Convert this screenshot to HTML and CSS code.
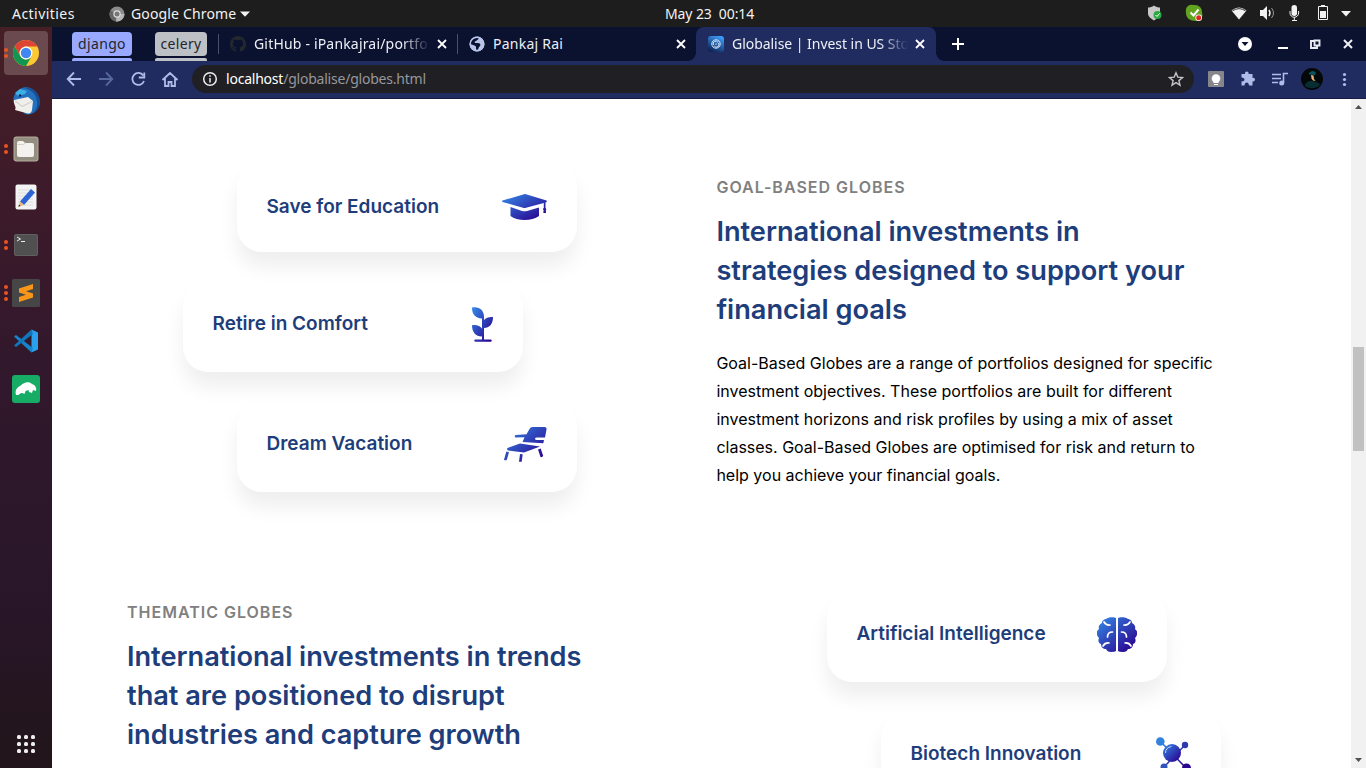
FILE: index.html
```html
<!DOCTYPE html>
<html lang="en">
<head>
<meta charset="utf-8">
<title>Globalise | Invest in US Stocks</title>
<link rel="stylesheet" href="styles.css">
</head>
<body>
<svg class="defs" width="0" height="0"><defs>
<linearGradient id="blue" x1="0" y1="0" x2="1" y2="1"><stop offset="0" stop-color="#348be8"/><stop offset=".9" stop-color="#2a0590"/></linearGradient>
<linearGradient id="fav" x1="0.7" y1="0" x2="0.2" y2="1"><stop offset="0" stop-color="#3d9bfa"/><stop offset="1" stop-color="#0a2050"/></linearGradient>
</defs></svg>
<header class="topbar">
  <span class="activities">Activities</span>
  <svg class="app-icon" width="16" height="16" viewBox="0 0 16 16"><circle cx="8" cy="8" r="7.5" fill="#8b8b8b"/><path d="M8 8L1.5 4.2A7.5 7.5 0 0 0 7 15.4z" fill="#656565"/><path d="M8 8h7.5A7.5 7.5 0 0 1 7 15.4z" fill="#b7b7b7"/><circle cx="8" cy="8" r="3.7" fill="#ddd"/><circle cx="8" cy="8" r="2.5" fill="#777"/></svg>
  <span class="app-name">Google Chrome</span>
  <svg class="caret" width="10" height="6"><path d="M0 .5h10L5 5.8z" fill="#f2f2f2"/></svg>
  <span class="clock">May 23&nbsp; 00:14</span>
  <svg class="tray" width="222" height="27" viewBox="1144 0 222 27">
    <path d="M1154 5.500c2 1.500 4 2 6 2v6c0 3-3 5-6 7-3-2-6-4-6-7v-6c2 0 4-.5 6-2z" fill="#c9c9c9"/><circle cx="1157.500" cy="15" r="4" fill="#2ca844"/><path d="M1155.500 15l1.500 1.500 2.500-3" stroke="#fff" fill="none"/>
    <path d="M1190 5c2-.7 3 0 5 0 4 0 7 3 7 7 0 2 1 3 0 5-1 3-4 4-6 4-6 0-10-3-10-8 0-1-.4-2 0-4 .5-2 2-3.500 4-4z" fill="#62a420"/><path d="M1190.500 12.500l3 3 5-6" stroke="#fff" stroke-width="2" fill="none"/><circle cx="1198.700" cy="17.700" r="3.300" fill="#fff"/><circle cx="1198.700" cy="17.700" r="2.500" fill="#e52620"/>
    <path d="M1231.500 10.500q7.500-6 15 0L1239 19.500z" fill="#f2f2f2"/><path d="M1232.500 10.800q6.500-4.300 13 0" fill="none" stroke="#1d1d1d" stroke-width=".9"/>
    <path d="M1260 10h3l4-4v14l-4-4h-3z" fill="#f2f2f2"/><path d="M1269 10q2 3 0 6" stroke="#f2f2f2" stroke-width="1.500" fill="none"/><path d="M1271.500 8q4 5 0 10" stroke="#999" fill="none"/>
    <rect x="1291.500" y="5" width="5.500" height="11" rx="2.700" fill="#f2f2f2"/><path d="M1290 11v2a4.300 4.300 0 0 0 8.600 0v-2M1294.300 17v3M1292 20.500h5" stroke="#f2f2f2" fill="none"/>
    <path d="M1318.500 6.500h9v13h-9z" stroke="#f2f2f2" fill="none"/><path d="M1321 5h4v1h-4zM1320 11h6v7h-6z" fill="#f2f2f2"/>
    <path d="M1341 11h10l-5 5.500z" fill="#f2f2f2"/>
  </svg>
</header>
<div class="desktop">
  <nav class="dock">
    <div class="app focused"><i class="dots"><b></b><b></b></i><svg width="28" height="28" viewBox="0 0 28 28"><circle cx="14" cy="14" r="13" fill="#fcc934"/><path d="M2.700 7.500A13 13 0 0 1 25.300 7.500H14a6.500 6.500 0 0 0-5.600 9.700z" fill="#dd4436"/><path d="M2.700 7.500l5.700 9.700a6.500 6.500 0 0 0 11.200 0L14 27A13 13 0 0 1 2.700 7.500z" fill="#129550"/><circle cx="14" cy="14" r="6.400" fill="#fff"/><circle cx="14" cy="14" r="5.200" fill="#4087f2"/></svg></div>
    <div class="app"><svg width="28" height="28" viewBox="0 0 28 28"><path d="M8 2C12-1 20 0 24 5c5 6 5 15-1 20-3 2-6 3-10 2L2 16C0 11 3 5 8 2z" fill="#2471bd"/><path d="M12 1c7 1 12 6 13 13 1 5-1 10-5 12 8-2 9-10 7-16C24 3 18 0 12 1z" fill="#174f96"/><path d="M3 6l5-4 7 2-2 3-7 2z" fill="#3cb0e6"/><path d="M2 13l14-3 5 4-1 9c-1 4-3 4-6 3L3 23c2-3-2-6-1-10z" fill="#f0efeb"/><path d="M3 13.500l7 6 10-5" stroke="#c9c7c2" fill="none"/><circle cx="8" cy="8.500" r="1.200" fill="#13264d"/></svg></div>
    <div class="app"><i class="dots"><b></b><b></b></i><svg width="28" height="28" viewBox="0 0 28 28"><rect x="1.500" y="1.500" width="25" height="25" rx="3" fill="#b3ad9d"/><rect x="2.500" y="2.500" width="23" height="23" rx="2" fill="#948e80"/><path d="M5 8a2 2 0 0 1 2-2h4l2 2h7a2 2 0 0 1 2 2v10a2 2 0 0 1-2 2H7a2 2 0 0 1-2-2z" fill="#f3f2ef"/><path d="M5.500 9.500h6l2-1.500" stroke="#d5d1c6" fill="none"/></svg></div>
    <div class="app"><svg width="28" height="28" viewBox="0 0 28 28"><rect x="3.500" y="1.500" width="21" height="25" rx="2" fill="#f3f3f3"/><path d="M6 7h15M6 10h15M6 13h15M6 16h15M6 19h15M6 22h15" stroke="#dcdcdc"/><path d="M8 18.500L19 6l4 3.500L12 22z" fill="#2d63d5"/><path d="M8 18.500l4 3.500-5.500 1.500z" fill="#eeb67c"/><path d="M7.200 21.500l1.500 1.500-2.500.7z" fill="#333"/></svg></div>
    <div class="app"><i class="dots"><b></b><b></b></i><svg width="28" height="28" viewBox="0 0 28 28"><rect x="2" y="3" width="24" height="22" rx="2" fill="#505050"/><rect x="2.500" y="3.500" width="23" height="21" rx="2" fill="none" stroke="#606060"/><path d="M5 6l3.500 2L5 10M9 10.500h4" stroke="#eee" fill="none"/></svg></div>
    <div class="app"><i class="dots"><b></b><b></b><b></b></i><svg width="28" height="28" viewBox="0 0 28 28"><rect width="28" height="28" rx="1.500" fill="#464646"/><path d="M7 9.500L21 5v5l-7 2.200 7 2.300v4L7 23v-5l7-2.200-7-2.300z" fill="#f99619"/></svg></div>
    <div class="app"><svg width="28" height="28" viewBox="0 0 28 28"><path d="M19.500 2.500L26 5.500v17l-6.500 3z" fill="#2ba0ee"/><path d="M2 9.500l2-1.500 17 13-1.500 4.500z" fill="#1684cd"/><path d="M2 18.500L4 20 21 7l-1.500-4.500z" fill="#1176bb"/></svg></div>
    <div class="app"><svg width="28" height="28" viewBox="0 0 28 28"><rect width="28" height="28" rx="3" fill="#17ac66"/><path d="M4 20c-1-4 0-7 4-9 4-4 9-5 12-2 3 1 5 4 4 7-1 0-2-1-3-1l-1 3-3-1-.500-2-3 1-1 3-2-1c-1 0-2 0-3 1l-1 1z" fill="#fff"/></svg></div>
    <svg class="grid-button" width="18" height="18" viewBox="0 0 18 18" fill="#eee"><rect x="0" y="0" width="4" height="4" rx="1.500"/><rect x="7" y="0" width="4" height="4" rx="1.500"/><rect x="14" y="0" width="4" height="4" rx="1.500"/><rect x="0" y="7" width="4" height="4" rx="1.500"/><rect x="7" y="7" width="4" height="4" rx="1.500"/><rect x="14" y="7" width="4" height="4" rx="1.500"/><rect x="0" y="14" width="4" height="4" rx="1.500"/><rect x="7" y="14" width="4" height="4" rx="1.500"/><rect x="14" y="14" width="4" height="4" rx="1.500"/></svg>
  </nav>
  <div class="browser">
    <div class="tabs">
      <div class="group django"><span>django</span></div>
      <div class="group celery"><span>celery</span></div>
      <div class="tab first">
        <svg width="16" height="16" viewBox="0 0 16 16"><path fill="#24292e" d="M8 0C3.580 0 0 3.580 0 8c0 3.540 2.290 6.530 5.470 7.590.4.070.55-.17.55-.38 0-.19-.01-.82-.01-1.490-2.010.37-2.530-.49-2.690-.94-.09-.23-.48-.94-.82-1.130-.28-.15-.68-.52-.01-.53.63-.01 1.080.58 1.230.82.72 1.210 1.870.87 2.330.66.070-.52.28-.87.51-1.070-1.780-.2-3.640-.89-3.640-3.950 0-.87.31-1.590.82-2.150-.08-.2-.36-1.020.08-2.120 0 0 .67-.21 2.200.82a7.500 7.500 0 0 1 4 0c1.530-1.040 2.200-.82 2.200-.82.44 1.100.16 1.920.08 2.120.51.56.82 1.270.82 2.150 0 3.070-1.870 3.750-3.650 3.950.29.25.54.73.54 1.480 0 1.070-.01 1.930-.01 2.200 0 .21.15.46.55.38A8 8 0 0 0 16 8c0-4.420-3.580-8-8-8z"/></svg>
        <span class="title fade t1">GitHub - iPankajrai/portfo</span><svg class="x" width="10" height="10"><path d="M1 1l8 8M9 1l-8 8"/></svg>
      </div>
      <div class="tab second">
        <svg width="16" height="16" viewBox="0 0 16 16"><circle cx="8" cy="8" r="7.500" fill="#b8c4e8"/><path d="M8 1.500c2 0 2 1 1 2L7 5C5 5.500 5.500 7 7 7h2c3 0 3 3 1 4L9 13.500c-1 1-2 0-2-1V10.500C5 9 3 8.500 1.500 8 1 5 4 1.500 8 1.500z" fill="#0b1230"/><circle cx="8" cy="8" r="6.800" fill="none" stroke="#b8c4e8" stroke-width="1.400"/></svg>
        <span class="title t2">Pankaj Rai</span><svg class="x" width="10" height="10"><path d="M1 1l8 8M9 1l-8 8"/></svg>
      </div>
      <div class="tab active">
        <svg width="16" height="16" viewBox="0 0 16 16"><rect width="16" height="16" rx="3" fill="url(#fav)"/><circle cx="8" cy="8" r="4.200" fill="none" stroke="#dbe9fb"/><path d="M5.500 9a2.500 2.500 0 0 1 4.500-2.500M10.500 7a2.500 2.500 0 0 1-4.300 3M8 7.500v1.500" stroke="#dbe9fb" fill="none"/></svg>
        <span class="title fade t3">Globalise | Invest in US Sto</span><svg class="x" width="10" height="10"><path d="M1 1l8 8M9 1l-8 8"/></svg>
      </div>
      <svg class="plus" width="12" height="12"><path d="M6 0v12M0 6h12" stroke="#fff" stroke-width="2"/></svg>
      <svg class="window-controls" width="118" height="16" viewBox="1237 36 118 16"><circle cx="1245" cy="44" r="7" fill="#fff"/><path d="M1241.500 42h7l-3.500 4z" fill="#0b1230"/><path d="M1278 48h10" stroke="#fff" stroke-width="2"/><path d="M1314 41h-3v7h6v-2M1314.500 40.500h5v5h-5z" stroke="#e9ebf3" stroke-width="1.900" fill="none"/><path d="M1344 40l8 8M1352 40l-8 8" stroke="#f1f1f5" stroke-width="2"/></svg>
    </div>
    <div class="toolbar">
      <svg class="nav-icons" width="116" height="18" viewBox="64 70 116 18" fill="none" stroke="#aebce9" stroke-width="1.800"><path d="M81 79H68M74 72.500L67.700 79l6.300 6.500"/><path d="M99 79h13M106 72.500l6.300 6.500-6.300 6.500" stroke="#58679c"/><path d="M143.300 75.500a6 6 0 1 0 .7 5.500M144.300 72.500V77.500h-5.500"/><path d="M162.500 80l7.500-7 7.500 7M165 78.500V86h3.500v-4h3v4h3.500v-7.500"/></svg>
      <div class="address">
        <svg width="16" height="16" viewBox="0 0 16 16" stroke="#eee" fill="none" stroke-width="1.500"><circle cx="8" cy="8" r="6.300"/><path d="M8 7v4.500M8 4.300v1.500"/></svg>
        <span class="url"><em>localhost</em>/globalise/globes.html</span>
        <svg class="star" width="16" height="16" viewBox="0 0 16 16"><path d="M8 1.800l1.800 4.300 4.700.4-3.600 3.100 1.100 4.600L8 11.700l-4 2.500 1.100-4.600-3.600-3.100 4.700-.4z" fill="none" stroke="#c4c4c7" stroke-width="1.400"/></svg>
      </div>
      <svg class="extensions" width="146" height="24" viewBox="1208 67 146 24"><rect x="1208" y="71" width="16" height="16" rx="1" fill="#85878a"/><circle cx="1216" cy="78.500" r="4.300" fill="#fff"/><path d="M1213.500 80h5v3h-5zM1214 84h4v1h-4z" fill="#fff"/>
      <path d="M1241.500 74h3.500c-.6-3.300 4.200-3.300 3.600 0h3.900v3.800c3.400-.6 3.400 4.200 0 3.600v4h-3.500c0-4-4.500-4-4.500 0h-3v-4c4 0 4-4 0-4z" fill="#aebce9"/>
      <path d="M1272 74.500h9M1272 78.500h9M1272 82.500h6M1283.500 83v-9.500h4.500" stroke="#aebce9" stroke-width="1.600" fill="none"/><circle cx="1281.700" cy="83" r="2.500" fill="#aebce9"/>
      <circle cx="1312" cy="79" r="11" fill="#050809"/><path d="M1305 86c0-3 3-5 6-5s8 1 9 4c-4 4-11 4-15 1z" fill="#082d33"/><path d="M1309 73q4-4 7 0l-1 2-6-.5z" fill="#07545f"/><path d="M1311 75l2.500.5.500 3.500 1.500 2-2.500-.5-1.500-2z" fill="#efb27b"/>
      <g fill="#aebce9"><circle cx="1344.500" cy="74.500" r="1.600"/><circle cx="1344.500" cy="79.500" r="1.600"/><circle cx="1344.500" cy="84.500" r="1.600"/></g></svg>
    </div>
    <div class="viewport">
      <main class="page">
        <section class="row goals">
          <div class="cards">
            <div class="card right tall"><h3 class="save">Save for Education</h3><svg class="cap" width="45" height="26" viewBox="0 0 45 26" fill="url(#blue)"><path d="M22 .2Q23 0 24 .3L44.500 6.500q.8.800 0 1.500L43.500 8.500v5.500c1 .8 1 1.500.3 2l.3 3h-2.800l.3-3c-1-.7-.7-1.400.2-2V9L24 13.800q-1.500.4-3 0L.5 8Q-.3 7 .5 6.500zM8.500 13l11.500 4q2.500.7 5 0L37 13.500V22C30 27.200 15 27.200 8.500 22z"/></svg></div>
            <div class="card"><h3 class="retire">Retire in Comfort</h3><svg width="21" height="35" viewBox="0 0 21 35" fill="url(#blue)"><path d="M0 .5C7-1 12.500 3 12 11v2C14 10.500 17 9.700 21 10c0 7-3.500 11-9 11v11.500h7q1.500 1.200 0 2.300H3q-1.500-1.100 0-2.300h7v-3C3.500 29.500 0 25 0 18.200c4-.8 8 .3 10 3.500V11.500C3 11 0 7 0 .5z"/></svg></div>
            <div class="card right"><h3 class="dream">Dream Vacation</h3><svg width="43" height="35" viewBox="0 0 43 35"><path d="M25.500 2Q26.500 0 28.500 0H40.500q2.500 0 2 2.500L41 10.500h-8q-2 0-2 1.200T33 13h7l-.7 3.300L18.500 15l2-4.800-9 .3q-1.500-1.300 0-2.500L22.500 7.200zM3.500 21L16 16.500l20 3L20 25.500 4 23.500q-1.500-1.500-.5-2.500zM2.300 24.500l2.700.7-2.200 7.500q-1.300 1-2.800 0zM16 27l2.700.3-1 7.500H15zM34 22.500l2.700-1 2.500 7.500q-1 1.500-2.700 1z" fill="url(#blue)"/></svg></div>
          </div>
          <div class="copy">
            <p class="label">GOAL-BASED GLOBES</p>
            <h2>International investments in<br>strategies designed to support your<br>financial goals</h2>
            <p class="body">Goal-Based Globes are a range of portfolios designed for specific<br>investment objectives. These portfolios are built for different<br>investment horizons and risk profiles by using a mix of asset<br>classes. Goal-Based Globes are optimised for risk and return to<br>help you achieve your financial goals.</p>
          </div>
        </section>
        <section class="row themes">
          <div class="copy">
            <p class="label">THEMATIC GLOBES</p>
            <h2>International investments in trends<br>that are positioned to disrupt<br>industries and capture growth</h2>
          </div>
          <div class="cards">
            <div class="card"><h3 class="ai">Artificial Intelligence</h3><svg width="40" height="35" viewBox="0 0 40 35"><path d="M19 1v33q-1 1-5 1c-3 0-4-1-5-3-3 0-5-2-5-5-3-1-3-4-2-6-3-3-3-7 0-9-1-3 1-5 3-6C5 3 8 2 9 2c2-2 8-2 10-1zM21 1v33q1 1 5 1c3 0 4-1 5-3 3 0 5-2 5-5 3-1 3-4 2-6 3-3 3-7 0-9 1-3-1-5-3-6 0-3-3-4-4-4-2-2-8-2-10-1z" fill="url(#blue)"/><path d="M7 5q2 3.500 6 3M10.500 20q0-5 5-5M6 29q2-3.500 6-3M33 5q-2 3.500-6 3M29.500 20q0-5-5-5M34 29q-2-3.500-6-3" fill="none" stroke="#fff" stroke-width="1.700" stroke-linecap="round"/></svg></div>
            <div class="card right"><h3 class="bio">Biotech Innovation</h3><svg width="35" height="36" viewBox="0 0 35 36"><path d="M4 4l26 27M29 8L8 30" stroke="url(#blue)" stroke-width="1.500"/><circle cx="4.300" cy="4.500" r="4.300" fill="#3182df"/><circle cx="29" cy="8" r="3.200" fill="#2e39af"/><circle cx="16" cy="16" r="9" fill="url(#blue)"/><circle cx="8" cy="30" r="3.500" fill="#3155bd"/><circle cx="30.500" cy="31" r="4.500" fill="#2a058f"/><path d="M9.500 16q0-5.500 6-6.500" stroke="#c2d4ff" fill="none"/></svg></div>
          </div>
        </section>
      </main>
      <div class="scrollbar"><svg width="7" height="4"><path d="M0 4h7L3.500 0z"/></svg><div class="thumb"></div><svg class="down" width="7" height="4"><path d="M0 0h7L3.500 4z"/></svg></div>
    </div>
  </div>
</div>
</body>
</html>
```
FILE: styles.css
```css
* { box-sizing: border-box; }
body { margin: 0; width: 1366px; height: 768px; overflow: hidden; display: flex; flex-direction: column; font-family: "Noto Sans", sans-serif; background: #fff; }
svg { display: block; flex: none; }
h2, h3, p { margin: 0; }
.defs { position: absolute; }
.topbar { flex: none; height: 27px; background: #1d1d1d; color: #f2f2f2; display: flex; align-items: center; font-size: 14px; white-space: nowrap; }
.activities { width: 97px; padding-left: 12px; letter-spacing: .45px; }
.app-icon { margin-left: 12px; }
.app-name { width: 109px; margin-left: 6px; letter-spacing: .15px; }
.clock { margin-left: 415px; letter-spacing: -.1px; }
.tray { margin-left: auto; }
.desktop { flex: 1; min-height: 0; display: flex; }
.dock { width: 52px; flex: none; display: flex; flex-direction: column; align-items: center; padding: 2px 0 15px; background: linear-gradient(#461f26, #3c1a2a 25%, #32182c 45%, #281628 80%, #22151b 97%); }
.app { width: 44px; height: 44px; margin: 2px 0; display: flex; align-items: center; justify-content: center; position: relative; border-radius: 4px; }
.focused { background: #6a4a4e; }
.dots { position: absolute; left: 0; top: 0; height: 44px; display: flex; flex-direction: column; justify-content: center; gap: 2px; }
.dots b { width: 4px; height: 4px; border-radius: 2px; background: #e95420; }
.grid-button { margin-top: auto; }
.browser { flex: 1; min-width: 0; display: flex; flex-direction: column; }
.tabs { height: 34px; flex: none; background: #0b1230; display: flex; align-items: center; color: #eef0f6; font-size: 14px; padding-right: 11px; }
.group { height: 34px; padding-top: 5px; font-size: 14px; letter-spacing: .35px; text-align: center; display: flex; flex-direction: column; gap: 2px; }
.group span { display: block; height: 24px; line-height: 23px; border-radius: 4px; color: #24252c; }
.group::after { content: ""; height: 3px; border-radius: 2px 2px 0 0; background: currentColor; }
.django { width: 60px; margin-left: 20px; color: #98a9ff; }
.django span { background: #98a9ff; }
.celery { width: 52px; margin-left: 23px; color: #bdc1c6; }
.celery span { background: #bdc1c6; }
.tab { height: 34px; display: flex; align-items: center; flex: none; position: relative; }
.tab.first { width: 239px; margin-left: 11px; padding-left: 12px; }
.tab.second { width: 239px; padding-left: 12px; }
.first::before, .second::before { content: ""; width: 1px; height: 20px; background: #4b5069; position: absolute; left: 0; }
.active { width: 240px; padding-left: 12px; background: #202c5f; border-radius: 8px 8px 0 0; }
.active::before, .active::after { content: ""; position: absolute; bottom: 0; width: 8px; height: 8px; }
.active::before { left: -8px; background: radial-gradient(circle at 0 0, #0b1230 7.5px, #202c5f 8px); }
.active::after { right: -8px; background: radial-gradient(circle at 100% 0, #0b1230 7.5px, #202c5f 8px); }
.title { margin-left: 8px; width: 176px; padding-bottom: 1px; white-space: nowrap; }
.t1 { letter-spacing: .18px; }
.t2 { letter-spacing: .25px; }
.t3 { letter-spacing: -.04px; }
.fade { -webkit-mask-image: linear-gradient(90deg, #000 84%, transparent); mask-image: linear-gradient(90deg, #000 84%, transparent); }
.x { margin-left: 7px; stroke: #fff; stroke-width: 1.800; }
.plus { margin-left: 16px; }
.window-controls { margin-left: auto; }
.toolbar { height: 38px; flex: none; background: #202c5f; border-bottom: 1px solid #151b42; display: flex; align-items: center; padding: 0 12px 1px; }
.address { width: 1002px; height: 28px; margin-left: 12px; border-radius: 14px; background: #202024; display: flex; align-items: center; padding: 0 10px; }
.url { margin-left: 8px; padding-bottom: 2px; color: #97979b; font-size: 14px; letter-spacing: -.22px; }
.url em { font-style: normal; color: #fff; }
.star { margin-left: auto; }
.extensions { margin-left: 14px; }
.viewport { flex: 1; min-height: 0; display: flex; }
.page { width: 1299px; overflow: hidden; padding: 63px 0 0 75px; font-family: Inter, sans-serif; }
.row { display: flex; }
.goals { height: 430px; }
.goals .cards { width: 589px; padding-left: 56px; }
.goals .copy { padding: 15px 0 0 .4px; }
.themes .copy { width: 589px; padding-top: 10px; }
.themes .cards { padding-left: 111px; }
.card { width: 340px; height: 90px; margin-bottom: 30px; padding: 25px 30px 25px 29.5px; border-radius: 25px; background: #fff; box-shadow: 0 15px 20px rgba(0, 0, 0, .066); display: flex; align-items: flex-start; justify-content: space-between; }
.card.right { margin-left: 54px; }
.card h3 { margin-top: 1px; font-size: 19px; line-height: 32px; font-weight: 600; color: #1e3d7b; white-space: nowrap; }
.card.tall h3 { margin-top: 4px; }
.cap { margin-top: 7px; }
.label { font-size: 16px; line-height: 20px; font-weight: 600; letter-spacing: 1px; color: #808080; }
.copy h2 { margin-top: 15px; font-size: 27.2px; line-height: 39px; letter-spacing: -.02px; font-weight: 600; color: #1e3d7b; white-space: nowrap; }
.body { margin-top: 20px; font-size: 16px; line-height: 28px; color: #000; white-space: nowrap; }
.scrollbar { width: 15px; background: #f1f1f1; display: flex; flex-direction: column; align-items: center; padding: 6px 0; }
.scrollbar svg { fill: #505050; }
.thumb { width: 11px; height: 104px; margin-top: 238px; background: #c1c1c1; }
.down { margin-top: auto; }
```
